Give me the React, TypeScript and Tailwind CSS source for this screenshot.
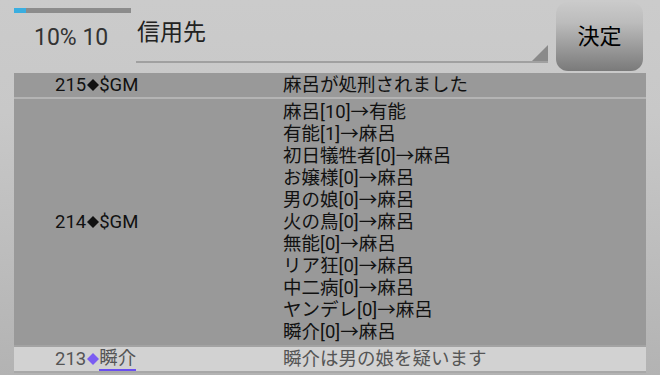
import React from "react";

const font = { fontFamily: 'Roboto, "Noto Sans CJK JP", sans-serif' };

const votes = [
  "麻呂[10]→有能",
  "有能[1]→麻呂",
  "初日犠牲者[0]→麻呂",
  "お嬢様[0]→麻呂",
  "男の娘[0]→麻呂",
  "火の鳥[0]→麻呂",
  "無能[0]→麻呂",
  "リア狂[0]→麻呂",
  "中二病[0]→麻呂",
  "ヤンデレ[0]→麻呂",
  "瞬介[0]→麻呂",
];

function Diamond({ color }: { color: string }) {
  return (
    <span className="inline-flex items-center justify-center w-[13px] h-[22px] pb-[1px]">
      <svg width="12" height="12" viewBox="0 0 12 12">
        <path d="M6 0 L12 6 L6 12 L0 6 Z" fill={color} />
      </svg>
    </span>
  );
}

export default function App() {
  return (
    <div
      className="w-[660px] h-[375px] overflow-hidden bg-[linear-gradient(to_bottom,#cbcbcb_0%,#c8c8c8_30%,#b3b3b3_100%)]"
      style={font}
    >
      {/* header */}
      <div className="flex h-[73px]">
        <div className="w-[136px] flex flex-col">
          <div className="mt-[8px] ml-[14px] w-[117px] h-[5px] bg-[#8c8c8c] flex">
            <div className="w-[12px] h-full bg-[#3aaee0]" />
          </div>
          <div className="mt-[10px] ml-[34px] text-[23px] leading-[30px] text-[#333]">10% 10</div>
        </div>
        <div className="relative w-[412px] h-[63px] border-b-2 border-[#a0a0a0]">
          <div className="pt-[18px] pl-[1px] text-[23px] leading-[30px] text-[#222]">信用先</div>
          <div className="absolute right-0 bottom-0 w-0 h-0 border-l-[16px] border-l-transparent border-b-[16px] border-b-[#8a8a8a]" />
        </div>
        <div className="ml-[8px] mt-[2px] w-[87px] h-[69px] rounded-[12px] bg-[linear-gradient(to_bottom,#cacaca,#bcbcbc_30%,#7a7a7a)] flex items-center justify-center text-[22px] text-black">
          決定
        </div>
      </div>

      {/* table */}
      <div className="mx-[14px] text-[18.5px] leading-[22px]">
        <div className="flex bg-[#999999] border-b-[2px] border-[#b4b4b4] h-[26px] items-center text-[#111]">
          <div className="w-[269px] pl-[41px] flex items-center">
            <span>215</span>
            <Diamond color="#111" />
            <span>$GM</span>
          </div>
          <div>麻呂が処刑されました</div>
        </div>
        <div className="flex bg-[#999999] border-b-[2px] border-[#a3a3a3] pt-[2px] pb-[2px] text-[#111]">
          <div className="w-[269px] pl-[41px] flex items-center">
            <span>214</span>
            <Diamond color="#111" />
            <span>$GM</span>
          </div>
          <div className="flex flex-col">
            {votes.map((v) => (
              <div key={v}>{v}</div>
            ))}
          </div>
        </div>
        <div className="flex bg-[#d2d2d2] border-b-[2px] border-[#a8a8a8] h-[26px] items-center text-[#555]">
          <div className="w-[269px] pl-[41px] flex items-center">
            <span>213</span>
            <Diamond color="#7a5cf2" />
            <span className="border-b-2 border-[#6b4ff0] leading-[21px]">瞬介</span>
          </div>
          <div>瞬介は男の娘を疑います</div>
        </div>
      </div>
    </div>
  );
}
